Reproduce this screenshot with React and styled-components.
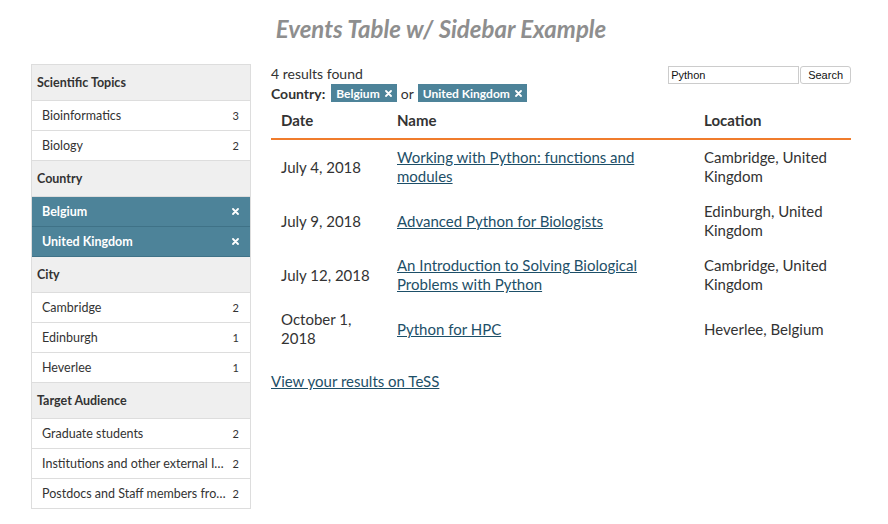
import React from 'react';
import styled, { createGlobalStyle } from 'styled-components';

const GlobalStyle = createGlobalStyle`
  body {
    margin: 0;
    background: #fff;
    font-family: Lato, 'Open Sans', sans-serif;
    color: #333;
  }
`;

const Page = styled.div`
  width: 820px;
  padding: 0 37px 0 31px;
`;

const Title = styled.h1`
  margin: 0;
  padding-top: 14px;
  height: 50px;
  box-sizing: border-box;
  text-align: center;
  font-size: 24px;
  font-style: italic;
  font-weight: 700;
  color: #8e8e8e;
`;

const Layout = styled.div`
  display: flex;
  gap: 20px;
  align-items: flex-start;
`;

const Sidebar = styled.div`
  width: 220px;
  box-sizing: border-box;
  flex-shrink: 0;
  border: 1px solid #ddd;
  border-bottom: none;
  margin-top: 14px;
`;

const GroupHeader = styled.div`
  height: 35px;
  display: flex;
  align-items: center;
  padding-left: 5px;
  background: #efefef;
  border-bottom: 1px solid #ddd;
  font-size: 12.5px;
  font-weight: 700;
  color: #333;
`;

const Item = styled.div`
  height: 29px;
  display: flex;
  align-items: center;
  padding: 0 11px 0 10px;
  border-bottom: 1px solid ${p => (p.$active ? '#3f7287' : '#ddd')};
  background: ${p => (p.$active ? '#4d8399' : '#fff')};
  color: ${p => (p.$active ? '#fff' : '#333')};
  font-size: 12.5px;
  font-weight: ${p => (p.$active ? 700 : 400)};
`;

const ItemLabel = styled.span`
  flex: 1;
  min-width: 0;
  white-space: nowrap;
  overflow: hidden;
  text-overflow: ellipsis;
`;

const Count = styled.span`
  font-size: 11px;
  margin-left: 3px;
`;

const Main = styled.div`
  flex: 1;
  margin-top: 14px;
`;

const TopBar = styled.div`
  display: flex;
  justify-content: space-between;
  align-items: flex-start;
`;

const Summary = styled.div`
  font-size: 14px;
  line-height: 19px;
`;

const FilterLine = styled.div`
  display: flex;
  align-items: center;
  gap: 4px;
  height: 20px;
`;

const FilterName = styled.span`
  font-weight: 700;
  margin-right: 2px;
`;

const Chip = styled.span`
  display: inline-flex;
  align-items: center;
  gap: 5px;
  height: 18px;
  padding: 0 5px;
  background: #4d8399;
  color: #fff;
  font-size: 12px;
  font-weight: 700;
`;

const SearchForm = styled.form`
  display: flex;
  margin: 0;
  padding-top: 2px;
`;

const SearchInput = styled.input`
  width: 131px;
  height: 18px;
  box-sizing: border-box;
  border: 1px solid #ccc;
  padding: 0 2px;
  font-family: 'Liberation Sans', Arial, sans-serif;
  font-size: 11px;
  color: #111;
`;

const SearchButton = styled.button`
  height: 18px;
  margin-left: 1px;
  padding: 0 7px;
  border: 1px solid #ccc;
  border-radius: 3px;
  background: #fff;
  font-family: 'Liberation Sans', Arial, sans-serif;
  font-size: 11px;
  color: #111;
`;

const Table = styled.table`
  width: 100%;
  table-layout: fixed;
  border-collapse: collapse;
  font-size: 15px;
`;

const Th = styled.th`
  box-sizing: border-box;
  text-align: left;
  font-weight: 700;
  padding: 0 10px 2px;
  height: 36px;
  border-bottom: 2px solid #f07c2c;
  width: ${p => p.$w || 'auto'};
  vertical-align: middle;
`;

const Td = styled.td`
  height: 54px;
  padding: 0 10px;
  line-height: 19px;
  vertical-align: middle;
`;

const Link = styled.a`
  color: #1d4f68;
  text-decoration: underline;
`;

const Footer = styled.div`
  margin-top: 16px;
  font-size: 15px;
  line-height: 19px;
`;

const Close = () => (
  <svg width="7" height="7" viewBox="0 0 7 7">
    <path d="M1 1L6 6M6 1L1 6" stroke="#fff" strokeWidth="1.8" strokeLinecap="round" />
  </svg>
);

const sidebar = [
  { title: 'Scientific Topics', items: [['Bioinformatics', 3], ['Biology', 2]] },
  { title: 'Country', items: [['Belgium', null, true], ['United Kingdom', null, true]] },
  { title: 'City', items: [['Cambridge', 2], ['Edinburgh', 1], ['Heverlee', 1]] },
  {
    title: 'Target Audience',
    items: [
      ['Graduate students', 2],
      ['Institutions and other external Institutes', 2],
      ['Postdocs and Staff members from the University', 2],
    ],
  },
];

const events = [
  ['July 4, 2018', 'Working with Python: functions and modules', 'Cambridge, United Kingdom'],
  ['July 9, 2018', 'Advanced Python for Biologists', 'Edinburgh, United Kingdom'],
  ['July 12, 2018', 'An Introduction to Solving Biological Problems with Python', 'Cambridge, United Kingdom'],
  ['October 1, 2018', 'Python for HPC', 'Heverlee, Belgium'],
];

export default function App() {
  return (
    <Page>
      <GlobalStyle />
      <Title>Events Table w/ Sidebar Example</Title>
      <Layout>
        <Sidebar>
          {sidebar.map(group => (
            <div key={group.title}>
              <GroupHeader>{group.title}</GroupHeader>
              {group.items.map(([label, count, active]) => (
                <Item key={label} $active={active}>
                  <ItemLabel>{label}</ItemLabel>
                  {active ? <Close /> : <Count>{count}</Count>}
                </Item>
              ))}
            </div>
          ))}
        </Sidebar>
        <Main>
          <TopBar>
            <Summary>
              <div>4 results found</div>
              <FilterLine>
                <FilterName>Country:</FilterName>
                <Chip>Belgium <Close /></Chip>
                <span>or</span>
                <Chip>United Kingdom <Close /></Chip>
              </FilterLine>
            </Summary>
            <SearchForm onSubmit={e => e.preventDefault()}>
              <SearchInput defaultValue="Python" />
              <SearchButton type="submit">Search</SearchButton>
            </SearchForm>
          </TopBar>
          <Table>
            <thead>
              <tr>
                <Th $w="116px">Date</Th>
                <Th $w="307px">Name</Th>
                <Th>Location</Th>
              </tr>
            </thead>
            <tbody>
              {events.map(([date, name, loc]) => (
                <tr key={name}>
                  <Td>{date}</Td>
                  <Td><Link href="#">{name}</Link></Td>
                  <Td>{loc}</Td>
                </tr>
              ))}
            </tbody>
          </Table>
          <Footer><Link href="#">View your results on TeSS</Link></Footer>
        </Main>
      </Layout>
    </Page>
  );
}
